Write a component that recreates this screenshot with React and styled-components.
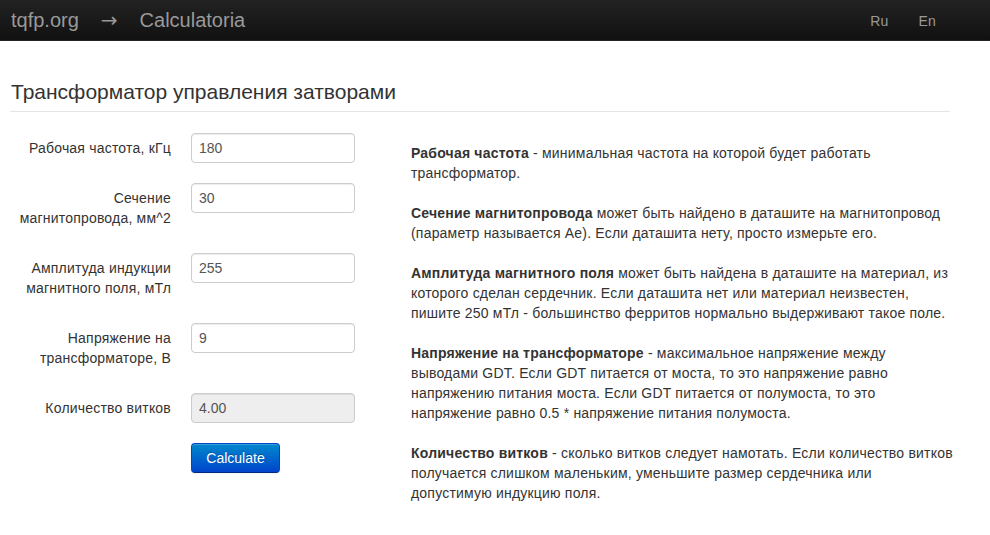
import React from "react";
import styled, { createGlobalStyle } from "styled-components";

const GlobalStyle = createGlobalStyle`
  html, body {
    margin: 0;
    padding: 0;
    background: #fff;
  }
  body {
    font-family: "Liberation Sans", Arial, sans-serif;
    font-size: 14px;
    line-height: 20px;
    color: #333;
  }
`;

const Navbar = styled.div`
  height: 40px;
  background: linear-gradient(to bottom, #222222, #111111);
  border-bottom: 1px solid #252525;
  display: flex;
  align-items: center;
  justify-content: space-between;
  padding: 0 11px;
`;

const Brand = styled.div`
  display: flex;
  align-items: center;
  gap: 22px;
  font-size: 20px;
  color: #999;
`;

const Arrow = styled.span`
  font-family: "DejaVu Sans", sans-serif;
  font-size: 20px;
`;

const NavLinks = styled.div`
  display: flex;
  margin-right: 28px;
`;

const NavLink = styled.a`
  color: #999;
  text-decoration: none;
  padding: 10px 15px 9px;
  font-size: 14px;
  letter-spacing: 0.2px;
`;

const Container = styled.div`
  width: 940px;
  margin-left: 10px;
`;

const PageHeader = styled.div`
  margin-top: 39px;
  padding-bottom: 7px;
  border-bottom: 1px solid #e5e5e5;
  padding-left: 1px;
`;

const Title = styled.h1`
  margin: 0;
  font-size: 21px;
  line-height: 24px;
  font-weight: normal;
  color: #333;
`;

const Row = styled.div`
  display: grid;
  grid-template-columns: 380px 540px;
  column-gap: 20px;
  margin-top: 21px;
  padding-left: 1px;
`;

const Form = styled.form`
  display: flex;
  flex-direction: column;
  gap: 20px;
`;

const Group = styled.div`
  display: flex;
  align-items: flex-start;
  gap: 20px;
`;

const Label = styled.label`
  width: 160px;
  text-align: right;
  padding: 5px 0;
  flex-shrink: 0;
  letter-spacing: 0.2px;
`;

const Input = styled.input`
  box-sizing: border-box;
  width: 164px;
  height: 30px;
  padding: 4px 7px;
  font-family: inherit;
  font-size: 14px;
  color: #555;
  border: 1px solid #ccc;
  border-radius: 4px;
  box-shadow: inset 0 1px 1px rgba(0, 0, 0, 0.075);
  background: ${(p) => (p.disabled ? "#eee" : "#fff")};
  outline: none;
`;

const Button = styled.button`
  margin-left: 180px;
  align-self: flex-start;
  width: 89px;
  height: 30px;
  font-family: inherit;
  font-size: 14px;
  color: #fff;
  text-shadow: 0 -1px 0 rgba(0, 0, 0, 0.25);
  background: linear-gradient(to bottom, #0088cc, #0044cc);
  border: 1px solid #0044cc;
  border-bottom-color: #002a80;
  border-radius: 4px;
  box-shadow: inset 0 1px 0 rgba(255, 255, 255, 0.2), 0 1px 2px rgba(0, 0, 0, 0.05);
  cursor: pointer;
`;

const Help = styled.div`
  padding-top: 10px;
  white-space: nowrap;
`;

const Para = styled.p`
  margin: 0 0 20px;
  letter-spacing: 0.2px;
`;

const fields = [
  { label: "Рабочая частота, кГц", value: "180" },
  { label: "Сечение магнитопровода, мм^2", value: "30" },
  { label: "Амплитуда индукции магнитного поля, мТл", value: "255" },
  { label: "Напряжение на трансформаторе, В", value: "9" },
  { label: "Количество витков", value: "4.00", disabled: true },
];

// line breaks follow the original page
const help = [
  {
    term: "Рабочая частота",
    lines: [" - минимальная частота на которой будет работать", "трансформатор."],
  },
  {
    term: "Сечение магнитопровода",
    lines: [
      " может быть найдено в даташите на магнитопровод",
      "(параметр называется Ae). Если даташита нету, просто измерьте его.",
    ],
  },
  {
    term: "Амплитуда магнитного поля",
    lines: [
      " может быть найдена в даташите на материал, из",
      "которого сделан сердечник. Если даташита нет или материал неизвестен,",
      "пишите 250 мТл - большинство ферритов нормально выдерживают такое поле.",
    ],
  },
  {
    term: "Напряжение на трансформаторе",
    lines: [
      " - максимальное напряжение между",
      "выводами GDT. Если GDT питается от моста, то это напряжение равно",
      "напряжению питания моста. Если GDT питается от полумоста, то это",
      "напряжение равно 0.5 * напряжение питания полумоста.",
    ],
  },
  {
    term: "Количество витков",
    lines: [
      " - сколько витков следует намотать. Если количество витков",
      "получается слишком маленьким, уменьшите размер сердечника или",
      "допустимую индукцию поля.",
    ],
  },
];

export default function App() {
  return (
    <>
      <GlobalStyle />
      <Navbar>
        <Brand>
          <span>tqfp.org</span>
          <Arrow>→</Arrow>
          <span>Calculatoria</span>
        </Brand>
        <NavLinks>
          <NavLink href="#">Ru</NavLink>
          <NavLink href="#">En</NavLink>
        </NavLinks>
      </Navbar>
      <Container>
        <PageHeader>
          <Title>Трансформатор управления затворами</Title>
        </PageHeader>
        <Row>
          <Form onSubmit={(e) => e.preventDefault()}>
            {fields.map((f) => (
              <Group key={f.label}>
                <Label>{f.label}</Label>
                <Input defaultValue={f.value} disabled={f.disabled} />
              </Group>
            ))}
            <Button type="submit">Calculate</Button>
          </Form>
          <Help>
            {help.map((h) => (
              <Para key={h.term}>
                <b>{h.term}</b>
                {h.lines.map((line, i) => (
                  <React.Fragment key={i}>
                    {i > 0 && <br />}
                    {line}
                  </React.Fragment>
                ))}
              </Para>
            ))}
          </Help>
        </Row>
      </Container>
    </>
  );
}
